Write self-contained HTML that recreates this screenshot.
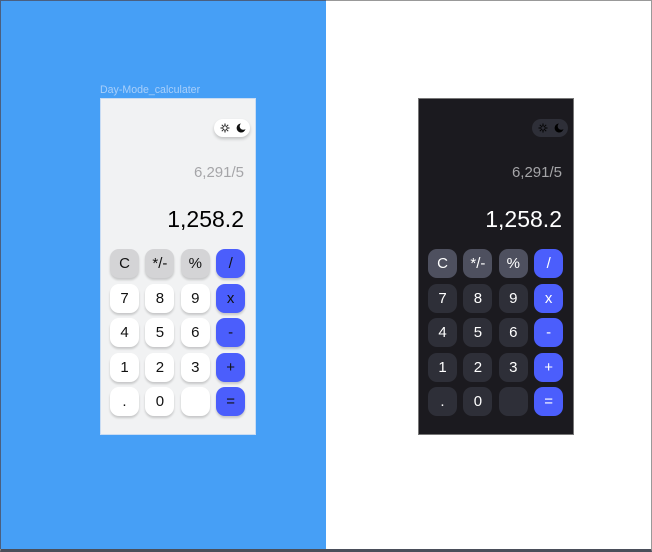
<!DOCTYPE html>
<html><head><style>
*{margin:0;padding:0;box-sizing:border-box}
body{width:652px;height:552px;overflow:hidden;background:#fff;position:relative;font-family:"Liberation Sans",sans-serif}
.outer{position:absolute;left:0;top:0;width:652px;height:552px;border:1px solid #999;border-bottom:3px solid #4a4e5a}
.blue{position:absolute;left:0;top:0;width:326px;height:549px;background:#469ff6;border-left:1px solid #4a5f80;border-top:1px solid #4a5f80}
.label{position:absolute;left:100px;top:84px;font-size:10.6px;color:#a9cffa}
.calc{position:absolute;top:98px;width:156px;height:337px}
.light{left:100px;background:#f1f2f3;border:1px solid #c9dcf3}
.dark{left:418px;background:#1b1a1f;border:1px solid #777}
.tog{position:absolute;left:113px;top:20px;width:36px;height:18px;border-radius:9px}
.light .tog{background:#fff;box-shadow:0 2px 3px rgba(0,0,0,.2)}
.dark .tog{background:#2e2f38}
.tog svg{position:absolute;left:0;top:0}
.expr{position:absolute;right:11px;top:65px;font-size:15px}
.light .expr{color:#a5a5a8}.dark .expr{color:#a5a5a8}
.res{position:absolute;right:11px;top:107px;font-size:23px}
.light .res{color:#000}.dark .res{color:#fff}
.grid{position:absolute;left:9px;top:150px;display:grid;grid-template-columns:repeat(4,29px);grid-auto-rows:29px;column-gap:6.4px;row-gap:5.5px}
.b{border-radius:9px;display:flex;align-items:center;justify-content:center;font-size:15px}
.light .b{background:#fff;color:#111;box-shadow:0 2px 2px rgba(0,0,0,.18)}
.light .b.g{background:#d4d4d6}
.dark .b{background:#2e2f38;color:#fff}
.dark .b.g{background:#4e505f}
.calc .b.a{background:#4b5efc;color:#fff}
.light .b.a{color:#111}
</style></head><body>
<div class="outer"></div>
<div class="blue"></div>
<div class="label">Day-Mode_calculater</div>

<div class="calc light">
 <div class="tog"><svg width="36" height="18"><g stroke="#111" stroke-width="1" fill="none"><circle cx="11" cy="9" r="2.2"/><path d="M11 4.5v1.5M11 12v1.5M6.5 9h1.5M14 9h1.5M7.8 5.8l1 1M13.2 11.2l1 1M7.8 12.2l1-1M13.2 6.8l1-1"/></g><path d="M27 4.5a4.5 4.5 0 1 0 4.5 5.5a3.5 3.5 0 0 1 -4.5 -5.5z" fill="#111"/></svg></div>
 <div class="expr">6,291/5</div>
 <div class="res">1,258.2</div>
 <div class="grid">
  <div class="b g">C</div><div class="b g">*/-</div><div class="b g">%</div><div class="b a">/</div>
  <div class="b">7</div><div class="b">8</div><div class="b">9</div><div class="b a">x</div>
  <div class="b">4</div><div class="b">5</div><div class="b">6</div><div class="b a">-</div>
  <div class="b">1</div><div class="b">2</div><div class="b">3</div><div class="b a">+</div>
  <div class="b">.</div><div class="b">0</div><div class="b"></div><div class="b a">=</div>
 </div>
</div>

<div class="calc dark">
 <div class="tog"><svg width="36" height="18"><g stroke="#000" stroke-width="1" fill="none"><circle cx="11" cy="9" r="2.2"/><path d="M11 4.5v1.5M11 12v1.5M6.5 9h1.5M14 9h1.5M7.8 5.8l1 1M13.2 11.2l1 1M7.8 12.2l1-1M13.2 6.8l1-1"/></g><path d="M27 4.5a4.5 4.5 0 1 0 4.5 5.5a3.5 3.5 0 0 1 -4.5 -5.5z" fill="#000"/></svg></div>
 <div class="expr">6,291/5</div>
 <div class="res">1,258.2</div>
 <div class="grid">
  <div class="b g">C</div><div class="b g">*/-</div><div class="b g">%</div><div class="b a">/</div>
  <div class="b">7</div><div class="b">8</div><div class="b">9</div><div class="b a">x</div>
  <div class="b">4</div><div class="b">5</div><div class="b">6</div><div class="b a">-</div>
  <div class="b">1</div><div class="b">2</div><div class="b">3</div><div class="b a">+</div>
  <div class="b">.</div><div class="b">0</div><div class="b"></div><div class="b a">=</div>
 </div>
</div>
</body></html>
